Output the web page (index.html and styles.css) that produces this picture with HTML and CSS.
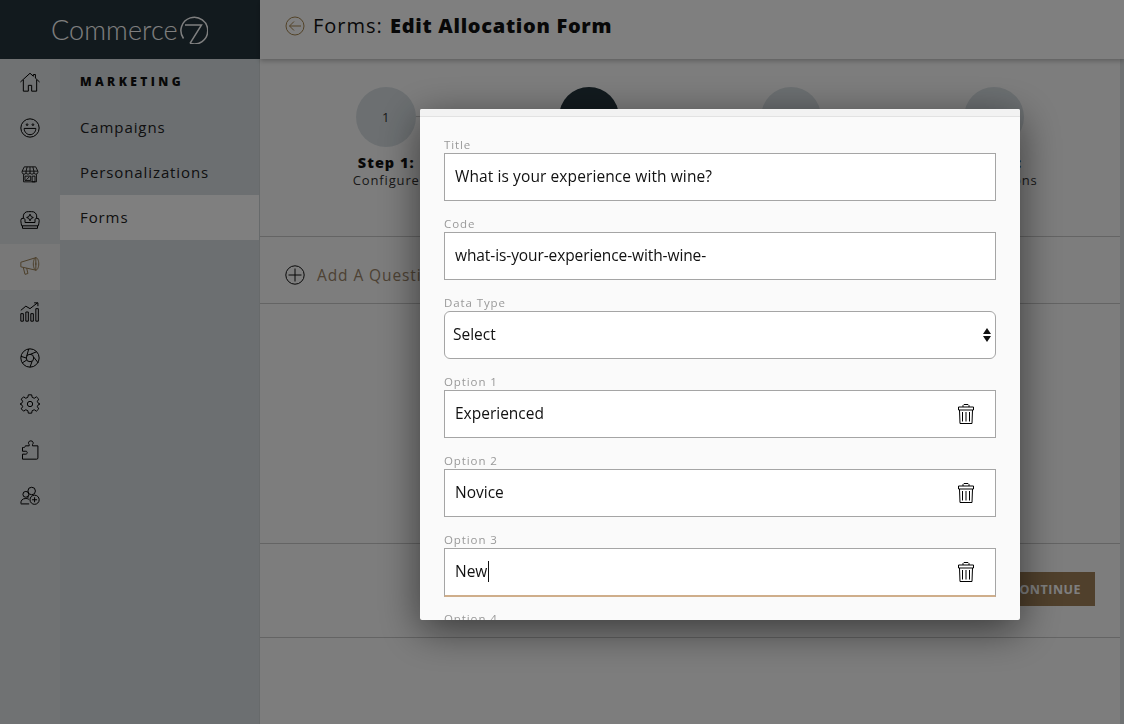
FILE: index.html
```html
<!DOCTYPE html>
<html lang="en">
<head>
<meta charset="utf-8">
<title>Forms: Edit Allocation Form</title>
<link rel="stylesheet" href="styles.css">
</head>
<body>
<div class="app">
  <aside class="side">
    <div class="logo"><span class="logo-text">Commerce</span>
      <svg class="logo-mark" viewBox="0 0 28 28" width="28" height="28"><path d="M10 27.300A13.400 13.400 0 1 0 3.500 22.500"/><path d="M5 9H21.500L10 27.300"/></svg>
    </div>
    <div class="side-body">
      <nav class="rail">
        <a class="rail-item"><svg viewBox="0 0 24 24"><path d="M.5 12 12 1.500l4 3.600V3h2.500v4.400L23.500 12M4 9.500V23h6v-7h4v7h6V9.500"/></svg></a>
        <a class="rail-item"><svg viewBox="0 0 24 24"><circle cx="12" cy="12" r="11"/><circle cx="8.500" cy="8" r="1"/><circle cx="15.500" cy="8" r="1"/><path d="M5 12.500h14c0 4-3 7.500-7 7.500s-7-3.500-7-7.500z"/></svg></a>
        <a class="rail-item"><svg viewBox="-2 -2 28 28"><path d="M4 2h16l3 6v2a2.800 2.800 0 0 1-5.500 0 2.800 2.800 0 0 1-5.500 0 2.800 2.800 0 0 1-5.500 0A2.800 2.800 0 0 1 1 10V8zM1 8h22M8 2 6.500 8v2M16 2l1.500 6v2M12 2v8M3 12.500V23h18V12.500M5 15h8v6H5zM15 15h4v8h-4zM7 20l4-4M6.500 17h.1M10.500 19.500h.1"/></svg></a>
        <a class="rail-item"><svg viewBox="0 0 24 24"><path d="M4 10V7a5.500 5.500 0 0 1 6-5h4a5.500 5.500 0 0 1 6 5v3M4 10a2.500 2.500 0 0 0-3 2.500c0 2 1 6.500 1 6.500h20s1-4.500 1-6.500A2.500 2.500 0 0 0 20 10c-1.500 0-2 1-2 2v3H6v-3c0-1-.5-2-2-2zM3 19v3h18v-3M12 5l1.500 3 2.500 1-2.500 1-1.500 3-1.500-3L8 9l2.500-1z"/></svg></a>
        <a class="rail-item rail-on"><svg viewBox="0 0 24 24"><path d="M1 7.500 19 2v15L1 13zM4 14l2 8 3.500-1-1.500-6.500M19 2c2 0 3.500 3.500 3.500 7.500S21 17 19 17c-1.500 0-3-3.500-3-7.500S17.500 2 19 2zM19 8v3"/></svg></a>
        <a class="rail-item"><svg viewBox="0 0 24 24"><path d="M1 14h3v9H1zM7 12h3v11H7zM13 14h3v9h-3zM19 8h3v15h-3zM1 10l6-5 5 3 9-7M17 1h4.500v4"/></svg></a>
        <a class="rail-item"><svg viewBox="0 0 24 24"><circle cx="12" cy="12" r="11"/><circle cx="12" cy="12" r="4.500"/><path d="M8 10 10.500 1.100M12.500 7.500 20 4.500M16.500 11 22 18M14.500 16 12 23M8 14.500 2.500 18M7.500 12 1.100 10"/></svg></a>
        <a class="rail-item"><svg viewBox="0 0 24 24"><circle cx="12" cy="12" r="3.200"/><path d="M10 1h4l.6 3 2.500 1.100 2.600-1.700 2.800 2.800-1.700 2.600L22 11.200l2 .8v0l-2 .8-1.200 2.400 1.700 2.600-2.800 2.800-2.600-1.700-2.500 1.100-.6 3h-4l-.6-3-2.500-1.100-2.600 1.700-2.800-2.800 1.700-2.600L2 12.800 0 12v0l2-.8 1.200-2.400L1.500 6.200l2.800-2.800 2.600 1.700 2.500-1.100z"/></svg></a>
        <a class="rail-item"><svg viewBox="0 0 24 24"><path d="M11 7V5.500C9.500 4 10 1 13 1s3.500 3 2 4.500V7h6.500v14.500a1.500 1.500 0 0 1-1.500 1.500H3v-6h4c2 0 2.500-3.500 0-3.500H3V9h1c2.500 0 2.500-2 2.500-2z"/></svg></a>
        <a class="rail-item"><svg viewBox="0 0 24 24"><circle cx="7" cy="10" r="3.500"/><circle cx="14" cy="6" r="4.500"/><path d="M1 21c0-4 2-6 6-6 2 0 3 .5 4 1.500M11 21.500H1M10.500 11.500c-1 1-1 2-1 3"/><circle cx="17.500" cy="16.500" r="5.500"/><path d="M17.500 13.500v6M14.500 16.500h6"/></svg></a>
      </nav>
      <nav class="subnav">
        <h2 class="sub-title">MARKETING</h2>
        <a class="sub-item">Campaigns</a>
        <a class="sub-item">Personalizations</a>
        <a class="sub-item sub-on">Forms</a>
      </nav>
    </div>
  </aside>
  <main class="main">
    <header class="top">
      <svg class="back" viewBox="0 0 20 20" width="20" height="20"><circle cx="10" cy="10" r="9"/><path d="M16 10H4.500M9 5.500 4.500 10 9 14.500"/></svg>
      <h1 class="page-title">Forms: <b>Edit Allocation Form</b></h1>
    </header>
    <div class="main-body">
      <div class="content">
        <section class="steps">
          <div class="step"><div class="dot">1</div><div class="step-name">Step 1:</div><div class="step-sub">Configure</div></div>
          <div class="step"><div class="dot dot-on">2</div><div class="step-name">Step 2:</div><div class="step-sub">Questions</div></div>
          <div class="step"><div class="dot">3</div><div class="step-name">Step 3:</div><div class="step-sub">Preview</div></div>
          <div class="step"><div class="dot">4</div><div class="step-name">Step 4:</div><div class="step-sub">Notifications</div></div>
        </section>
        <section class="add-row">
          <svg class="plus" viewBox="0 0 20 20" width="20" height="20"><circle cx="10" cy="10" r="9.200"/><path d="M10 3.500v13M3.500 10h13"/></svg>
          <span class="add-text">Add A Question</span>
        </section>
        <section class="blank"></section>
        <section class="actions"><button class="continue">CONTINUE</button></section>
      </div>
      <div class="edge"></div>
    </div>
  </main>
</div>
<div class="overlay"></div>
<div class="modal">
  <div class="modal-head"></div>
  <div class="modal-body">
    <div class="field"><label class="lab">Title</label><div class="box box-title">What is your experience with wine?</div></div>
    <div class="field"><label class="lab">Code</label><div class="box box-code">what-is-your-experience-with-wine-</div></div>
    <div class="field"><label class="lab">Data Type</label><div class="box box-select">Select<svg class="updown" viewBox="0 0 8 14" width="8" height="14"><path d="M4 0 8 6H0zM0 8h8l-4 6z"/></svg></div></div>
    <div class="field"><label class="lab">Option 1</label><div class="box">Experienced<svg class="trash" viewBox="0 0 16 20" width="16" height="20"><path d="M.5 3h15v3H.5zM5 3V1.500L6 .5h4l1 1V3M1.500 6l.5 13.500h12L14.500 6M4.500 8v9.500M8 8v9.500M11.500 8v9.500"/></svg></div></div>
    <div class="field"><label class="lab">Option 2</label><div class="box">Novice<svg class="trash" viewBox="0 0 16 20" width="16" height="20"><path d="M.5 3h15v3H.5zM5 3V1.500L6 .5h4l1 1V3M1.500 6l.5 13.500h12L14.500 6M4.500 8v9.500M8 8v9.500M11.500 8v9.500"/></svg></div></div>
    <div class="field"><label class="lab">Option 3</label><div class="box box-focus"><span class="caret-text">New</span><svg class="trash" viewBox="0 0 16 20" width="16" height="20"><path d="M.5 3h15v3H.5zM5 3V1.500L6 .5h4l1 1V3M1.500 6l.5 13.500h12L14.500 6M4.500 8v9.500M8 8v9.500M11.500 8v9.500"/></svg></div></div>
    <div class="field"><label class="lab">Option 4</label><div class="box"></div></div>
  </div>
</div>
</body>
</html>
```
FILE: styles.css
```css
* { box-sizing: border-box; }
html, body { margin: 0; height: 100%; overflow: hidden; }
body { font-family: "Open Sans", "Liberation Sans", sans-serif; color: #111; background: #fff; }

.app { display: flex; height: 724px; width: 1124px; isolation: isolate; }

.side { width: 260px; display: flex; flex-direction: column; flex: none; }
.logo { height: 59px; background: #25353d; display: flex; align-items: center; justify-content: flex-start; padding-left: 51px; }
.logo-text { font-family: Lato, sans-serif; font-weight: 300; font-size: 27px; color: #fff; letter-spacing: .1px; }
.logo-mark { fill: none; stroke: #fff; stroke-width: 1.500; margin-left: 2px; }
.side-body { flex: 1; display: flex; }
.rail { width: 60px; background: #e0e4e6; display: flex; flex-direction: column; padding-top: 1px; }
.rail-item { height: 46px; display: flex; align-items: center; justify-content: center; padding-bottom: 2px; }
.rail-item svg { width: 20px; height: 20px; fill: none; stroke: #000; stroke-width: 1.200; overflow: visible; }
.rail-on { background: #f0f0f0; }
.rail-on svg { stroke: #9a7f55; }
.subnav { flex: 1; background: #d8dfe3; border-right: 1px solid #cfd4d6; }
.sub-title { margin: 0; height: 46px; padding: 16px 0 0 20px; font-size: 12px; line-height: 14px; font-weight: 800; letter-spacing: 3.400px; color: #111; }
.sub-item { display: flex; align-items: center; height: 45px; padding: 0 0 2px 20px; font-size: 15px; letter-spacing: .9px; color: #222; }
.sub-on { background: #fff; }

.main { flex: 1; display: flex; flex-direction: column; background: #fbfbfb; }
.top { height: 59px; flex: none; background: #fff; box-shadow: 0 2px 5px rgba(0,0,0,.25); display: flex; align-items: center; padding: 0 0 8px 25px; gap: 8px; position: relative; }
.back { fill: none; stroke: #a5854f; stroke-width: 1; margin-top: 1px; }
.page-title { margin: 0; font-size: 20px; font-weight: 400; letter-spacing: 1px; color: #111; }
.page-title b { font-weight: 800; font-size: 20px; letter-spacing: .7px; margin-left: 1px; }
.main-body { flex: 1; display: flex; }
.content { flex: 1; display: flex; flex-direction: column; }
.steps { height: 178px; flex: none; display: grid; grid-template-columns: repeat(4, 1fr); padding: 28px 25px 0; border-bottom: 1px solid #c8c8c8; }
.step { display: flex; flex-direction: column; align-items: center; position: relative; }
.step:not(:last-child)::after { content: ""; position: absolute; left: 50%; width: 100%; top: 29px; height: 1px; background: #c8c8c8; }
.dot { width: 60px; height: 60px; border-radius: 50%; background: #d8dfe3; display: flex; align-items: center; justify-content: center; font-size: 13px; color: #333; position: relative; z-index: 1; padding-right: 1px; }
.dot-on { background: #25353d; color: #fff; }
.step-name { margin-top: 7px; font-weight: 800; font-size: 14.500px; line-height: 18px; letter-spacing: 1px; }
.step-sub { font-size: 13px; line-height: 17px; letter-spacing: .85px; color: #333; }
.add-row { height: 67px; flex: none; display: flex; align-items: center; gap: 12px; padding: 10px 0 0 25px; border-bottom: 1px solid #c8c8c8; }
.plus { fill: none; stroke: #111; stroke-width: 1; }
.add-text { font-size: 15.500px; font-weight: 400; letter-spacing: .9px; color: #9a8468; }
.blank { height: 240px; flex: none; border-bottom: 1px solid #c8c8c8; }
.actions { height: 94px; flex: none; display: flex; justify-content: flex-end; align-items: flex-start; padding: 28px 25px 0 0; border-bottom: 1px solid #c8c8c8; }
.continue { width: 94px; height: 34px; padding: 0 4px 0 0; border: 0; background: #a08058; color: #fff; font-family: "Open Sans", sans-serif; font-weight: 700; font-size: 12.500px; letter-spacing: .5px; }
.edge { width: 4px; flex: none; background: #dfe4e6; }

.overlay { position: fixed; inset: 0; background: rgba(0,0,0,.5); }
.modal { position: fixed; left: 420px; top: 109px; width: 600px; height: 511px; background: #fafafa; border-radius: 2px; box-shadow: 0 10px 40px rgba(0,0,0,.55); overflow: hidden; display: flex; flex-direction: column; }
.modal-head { height: 8px; flex: none; background: #f2f2f2; border-bottom: 1px solid #e2e2e2; }
.modal-body { padding: 20px 24px 0; }
.field { height: 79px; }
.lab { display: block; height: 16px; font-size: 11.500px; line-height: 16px; letter-spacing: .9px; color: #999; }
.box { height: 48px; background: #fff; border: 1px solid #a5a5a5; padding: 0 10px 2px; display: flex; align-items: center; justify-content: space-between; font-size: 15.500px; color: #111; }
.box-title { letter-spacing: .1px; }
.box-code { letter-spacing: -.1px; }
.box-select { border-radius: 6px; padding: 0 8px 2px; }
.updown { fill: #111; margin: 2px -4px 0 0; }
.trash { fill: none; stroke: #000; stroke-width: 1; margin: 2px 11px 0 0; }
.box-focus { height: 49px; border-bottom: 2px solid #cfae8b; }
.caret-text { border-right: 1px solid #111; line-height: 21px; padding-right: 1px; }
```
